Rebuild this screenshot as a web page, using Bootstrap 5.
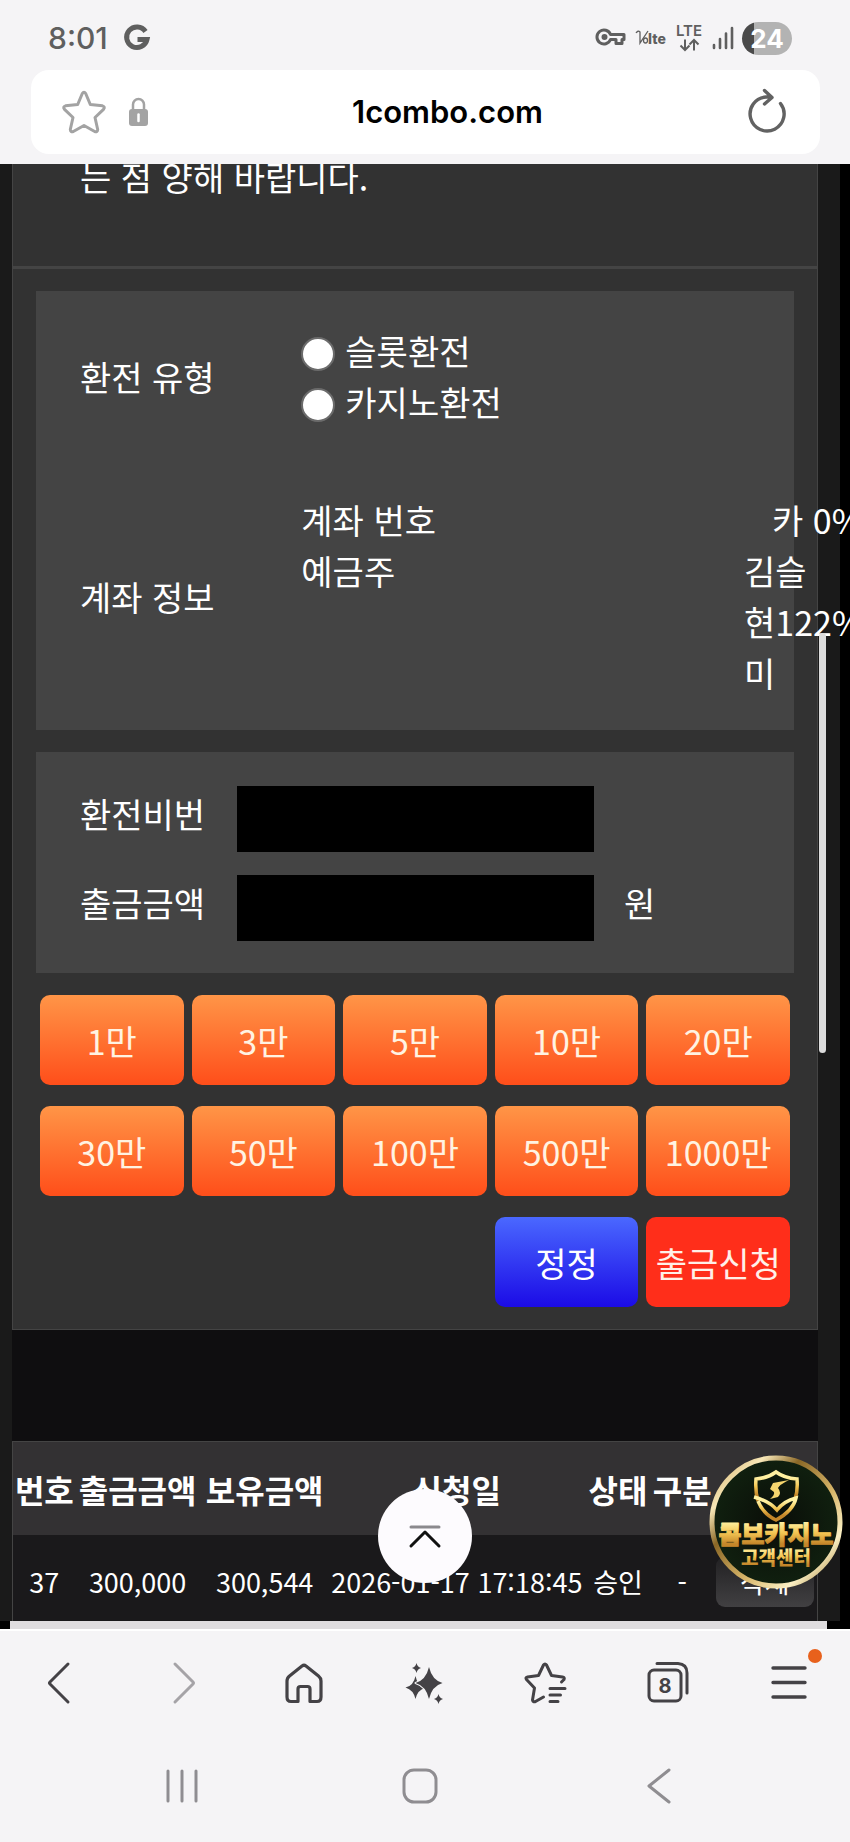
<!DOCTYPE html>
<html lang="ko">
<head>
<meta charset="utf-8">
<meta name="viewport" content="width=device-width, initial-scale=1">
<title>1combo.com</title>
<link href="https://cdn.jsdelivr.net/npm/bootstrap@5.3.0/dist/css/bootstrap.min.css" rel="stylesheet">
<style>
  body { background: #f5f4f6; font-family: "Noto Sans CJK KR", sans-serif; overflow-x: hidden; }
  svg { display: block; overflow: visible; }
  .tool-btn { background: none; border: 0; padding: 0; color: #444246; }

  /* Browser chrome */
  .status-bar { height: 70px; padding: 6px 58px 0 48px; color: #5f5f5f; font-family: Inter, sans-serif; }
  .clock { font-size: 30px; line-height: 36px; font-weight: 500; }
  .battery { width: 50px; height: 33px; border-radius: 17px; background: linear-gradient(90deg, #4a4a4a 12px, #b3b3b3 12px); color: #fff; font-size: 26px; line-height: 33px; font-weight: 700; }
  .url-bar { height: 84px; margin: 0 30px 10px 31px; padding: 0 34px 0 31px; border-radius: 18px; background: #fff; }
  .url-text { font-family: Inter, sans-serif; font-size: 31px; line-height: 36px; font-weight: 600; color: #000; }
  .url-left { width: 87px; }
  .url-right { width: 40px; }

  /* Web page */
  .viewport-area { background: #000; overflow: hidden; }
  .site { background: #1a1a1a; margin-right: 10px; padding: 0 22px 0 12px; color: #fff; font-size: 34px; line-height: 51px; }
  .site-column { background: #0f0e10; }
  .panel { background: #323232; border: 1px solid #444; border-top: 0; }
  .notice { margin: -13px 0 0; padding: 0 67px 64px; border-bottom: 3px solid #444; }
  .panel-body { padding: 22px 23px; }
  .block { background: #444; padding: 34px 0 32px 44px; margin-bottom: 22px; }
  .info-row { display: grid; grid-template-columns: 31% 62% 7%; align-items: center; }
  .info-row + .info-row { margin-top: 67px; }
  .kind-radio { appearance: none; width: 34px; height: 34px; margin: 6px 10px 0 0; border: 2px solid #6b6b6b; border-radius: 50%; background: #fff; }
  .kind-radio:checked { box-shadow: inset 0 0 0 8px #fff; background: #0d6efd; }
  .owner-value { white-space: nowrap; }
  .rate-value { padding-left: 28px; }
  .entry-row { display: grid; grid-template-columns: 22% 50% auto; align-items: start; line-height: 56px; }
  .entry-row + .entry-row { margin-top: 23px; }
  .entry-row input { height: 66px; width: 100%; border: 0; border-radius: 0; background: #000; color: #fff; padding: 0 16px; }
  .unit { padding-left: 30px; }
  .amounts { display: grid; grid-template-columns: repeat(5, 1fr); gap: 21px 8px; padding: 0 4px; }
  .amount-btn { height: 90px; padding: 0; border: 0; border-radius: 10px; font-size: 34px; line-height: 51px; white-space: nowrap; color: #fff3e2; background: linear-gradient(#ff9547, #ff4e1a); }
  .reset-btn { grid-column: 4; color: #fff; background: linear-gradient(#4a68ff, #1b0be6); }
  .apply-btn { color: #fff0e8; background: #ff2e1a; }

  .history { margin-top: 111px; border: 1px solid #444; border-bottom: 0; }
  .history table { width: 100%; table-layout: fixed; text-align: center; white-space: nowrap; }
  .history th { height: 93px; background: #333133; font-size: 32px; line-height: 48px; font-weight: 700; padding: 0; overflow: visible; }
  .history td { height: 86px; background: #1a191b; font-size: 27px; line-height: 40px; padding: 8px 0 0; }
  .delete-btn { width: 98px; height: 50px; border: 0; border-radius: 9px; padding: 0; font-size: 27px; line-height: 40px; color: #fff; background: linear-gradient(#222123, #414042); }
  .scroll-x { height: 8px; margin: 0 23px 0 10px; background: #dfdddf; }
  .scroll-y { position: absolute; right: 24px; top: 32%; height: 420px; width: 7px; border-radius: 4px; background: #dcdcdc; }

  .to-top { position: absolute; left: 50%; bottom: 46px; width: 94px; height: 94px; margin-left: -47px; border-radius: 50%; background: #fdfbfe; }
  .support { position: absolute; right: 7px; bottom: 40px; }

  .toolbar { height: 213px; border-top: 2px solid #fff; }
  .tool-row { height: 104px; }
  .tool-row .tool-btn, .system-row .tool-btn { flex: 1 1 0; min-width: 0; display: flex; justify-content: center; }
  .system-row { height: 101px; padding: 0 72px 0 63px; }
  .system-row .tool-btn { color: #8f8d91; }
</style>
</head>
<body class="d-flex flex-column min-vh-100">

<header>
  <div class="status-bar d-flex align-items-center justify-content-between">
    <div class="d-flex align-items-center">
      <span class="clock">8:01</span>
      <svg class="ms-3" width="26" height="26" viewBox="0 0 26 26" fill="none" stroke="currentColor" stroke-width="5"><path d="M21.500 6.500A10.300 10.300 0 1 0 23 14.500H13.500"/></svg>
    </div>
    <div class="d-flex align-items-center gap-2">
      <svg width="30" height="18" viewBox="0 0 30 18" fill="none" stroke="currentColor" stroke-width="3"><path d="M14.500 5.500H28V10.500H26V14.500H20V10.500H14.500A7 7 0 1 1 14.500 5.500Z" stroke-linejoin="round"/><circle cx="8.500" cy="8" r="1.500"/></svg>
      <svg width="34" height="18" viewBox="0 0 34 18"><g fill="none" stroke="currentColor" stroke-width="1.300"><path d="M2 4Q4 1 6 3L6 14L14 2"/><ellipse cx="11.500" cy="11.500" rx="2" ry="2.500"/></g><text x="14" y="15" font-family="Inter" font-size="14" font-weight="800" fill="currentColor">lte</text></svg>
      <svg width="28" height="28" viewBox="0 0 28 28" fill="none" stroke="currentColor" stroke-width="2"><text x="0" y="12" font-family="Inter" font-size="15" font-weight="600" fill="currentColor" stroke="none">LTE</text><path d="M9 15.500V26M4.500 21.500L9 26L13.500 21.500M18 26.500V16M13.500 20.500L18 16L22.500 20.500"/></svg>
      <svg width="22" height="24" viewBox="0 0 22 24" stroke="currentColor" stroke-width="2.600" stroke-linecap="round"><path d="M2 19V22M8 13V22M14 7.500V22M20 2V22"/></svg>
      <div class="battery text-center">24</div>
    </div>
  </div>
  <div class="url-bar d-flex align-items-center">
    <div class="url-left d-flex align-items-center">
      <button class="tool-btn" aria-label="북마크"><svg width="44" height="44" viewBox="0 0 44 44" fill="none" stroke="#a3a3a3" stroke-width="3" stroke-linejoin="round"><path d="M20.300 3.500Q22 0.800 23.700 3.500L28.300 14.500L40.500 15.800Q43.500 16.800 41.500 19.300L33 27.500L35.700 39.500Q35.500 42.500 32.700 41.500L22 35.500L11.300 41.500Q8.500 42.500 8.300 39.500L11 27.500L2.500 19.300Q0.500 16.800 3.500 15.800L15.700 14.500Z"/></svg></button>
      <svg class="ms-auto" width="21" height="30" viewBox="0 0 21 30"><path d="M5 13V7.500A5.500 5.500 0 0 1 16 7.500V13" fill="none" stroke="#a3a3a3" stroke-width="2.500"/><rect x="1" y="12" width="19" height="17" rx="3" fill="#a3a3a3"/><path d="M10.500 17.500V24" stroke="#fff" stroke-width="2.500" stroke-linecap="round"/></svg>
    </div>
    <span class="url-text flex-grow-1 text-center">1combo.com</span>
    <div class="url-right d-flex justify-content-end">
      <button class="tool-btn" aria-label="새로고침"><svg width="40" height="46" viewBox="0 0 40 46" fill="none" stroke="#626262" stroke-width="3.400" stroke-linecap="round" stroke-linejoin="round"><path d="M34.500 14.500A17 17 0 1 1 20 8H25.500M18.500 1.500L26 8.500L18.500 15"/></svg></button>
    </div>
  </div>
</header>

<main class="viewport-area position-relative flex-grow-1">
  <div class="site">
    <div class="site-column">
      <section class="panel">
        <p class="notice">는 점 양해 바랍니다.</p>
        <form class="panel-body">
          <div class="block">
            <div class="info-row">
              <div>환전 유형</div>
              <div>
                <div class="d-flex align-items-center"><input class="kind-radio" type="radio" name="kind" id="kindSlot"><label for="kindSlot">슬롯환전</label></div>
                <div class="d-flex align-items-center"><input class="kind-radio" type="radio" name="kind" id="kindCasino"><label for="kindCasino">카지노환전</label></div>
              </div>
            </div>
            <div class="info-row">
              <div>계좌 정보</div>
              <div class="align-self-start">계좌 번호<br>예금주</div>
              <div class="owner-value"><div class="rate-value">카 0%</div>김슬<br>현122%<br>미</div>
            </div>
          </div>
          <div class="block">
            <div class="entry-row">
              <label for="pin">환전비번</label>
              <input type="password" id="pin">
            </div>
            <div class="entry-row">
              <label for="amount">출금금액</label>
              <input type="text" id="amount">
              <span class="unit">원</span>
            </div>
          </div>
          <div class="amounts">
            <button type="button" class="amount-btn">1만</button>
            <button type="button" class="amount-btn">3만</button>
            <button type="button" class="amount-btn">5만</button>
            <button type="button" class="amount-btn">10만</button>
            <button type="button" class="amount-btn">20만</button>
            <button type="button" class="amount-btn">30만</button>
            <button type="button" class="amount-btn">50만</button>
            <button type="button" class="amount-btn">100만</button>
            <button type="button" class="amount-btn">500만</button>
            <button type="button" class="amount-btn">1000만</button>
            <button type="reset" class="amount-btn reset-btn">정정</button>
            <button type="button" class="amount-btn apply-btn">출금신청</button>
          </div>
        </form>
      </section>

      <section class="history">
        <table>
          <colgroup>
            <col style="width:7.8%"><col style="width:15.4%"><col style="width:16.2%"><col style="width:31.6%"><col style="width:8.5%"><col style="width:7.5%"><col style="width:13%">
          </colgroup>
          <thead>
            <tr><th>번호</th><th>출금금액</th><th>보유금액</th><th>신청일</th><th>상태</th><th>구분</th><th></th></tr>
          </thead>
          <tbody>
            <tr><td>37</td><td>300,000</td><td>300,544</td><td>2026-01-17 17:18:45</td><td>승인</td><td>-</td><td><button class="delete-btn">삭제</button></td></tr>
          </tbody>
        </table>
      </section>
    </div>
  </div>
  <div class="scroll-x"></div>
  <div class="scroll-y"></div>

  <button class="tool-btn to-top d-flex align-items-center justify-content-center" aria-label="맨 위로">
    <svg width="36" height="26" viewBox="0 0 36 26" fill="none" stroke-linecap="round" stroke-linejoin="round" stroke-width="3"><path d="M4 4H32" stroke="#8b898d"/><path d="M4 23L18 9L32 23" stroke="#111"/></svg>
  </button>

  <a href="#" class="support" aria-label="고객센터">
    <svg width="134" height="134" viewBox="0 0 134 134">
      <defs>
        <linearGradient id="goldRing" x1="0" y1="0" x2="1" y2="1"><stop offset="0" stop-color="#c7a25a"/><stop offset=".2" stop-color="#f8e8b8"/><stop offset=".35" stop-color="#8a6726"/><stop offset=".6" stop-color="#d8b66a"/><stop offset=".8" stop-color="#fbf0c4"/><stop offset="1" stop-color="#9a7428"/></linearGradient>
        <linearGradient id="goldText" x1="0" y1="0" x2="0" y2="1"><stop offset=".2" stop-color="#fff0a0"/><stop offset=".5" stop-color="#f3c552"/><stop offset=".8" stop-color="#c4862a"/></linearGradient>
        <radialGradient id="darkFace"><stop offset="0" stop-color="#0a0d08"/><stop offset="1" stop-color="#10200f"/></radialGradient>
      </defs>
      <circle cx="67" cy="67" r="64" fill="url(#darkFace)" stroke="url(#goldRing)" stroke-width="5"/>
      <g fill="none" stroke="url(#goldText)" stroke-width="3.500" stroke-linejoin="miter">
        <path d="M49 46Q46 36 47 24Q59 23 67 17Q75 23 88 24Q89 36 86 44"/>
        <path d="M45 42Q60 46 68 55Q75 46 87 43Q84 56 67 65Q54 59 49 46"/>
      </g>
      <path d="M64 28L80 25Q70 30 69 33Q73 38 69 42L61 44Q66 40 65 37L61 34Z" fill="#f6d66e"/>
      <g font-family="Noto Sans CJK KR" font-weight="900" text-anchor="middle" fill="url(#goldText)" stroke-linejoin="round">
        <text x="67" y="89" font-size="25" stroke="url(#goldText)" stroke-width="1">콤보카지노</text>
        <text x="67" y="110" font-size="19">고객센터</text>
      </g>
    </svg>
  </a>
</main>

<footer class="toolbar">
  <div class="tool-row d-flex align-items-center">
    <button class="tool-btn" aria-label="뒤로"><svg width="44" height="44" viewBox="0 0 44 44" fill="none" stroke="currentColor" stroke-width="3" stroke-linecap="round" stroke-linejoin="round"><path d="M29 3L11 21Q10 22 11 23L29 41"/></svg></button>
    <button class="tool-btn" aria-label="앞으로"><svg width="44" height="44" viewBox="0 0 44 44" fill="none" stroke="#a5a3a7" stroke-width="3" stroke-linecap="round" stroke-linejoin="round"><path d="M15 3L33 21Q34 22 33 23L15 41"/></svg></button>
    <button class="tool-btn" aria-label="홈"><svg width="44" height="44" viewBox="0 0 44 44" fill="none" stroke="currentColor" stroke-width="3.200" stroke-linejoin="round"><path d="M16 40.500H9Q5 40.500 5 36V20Q5 17 7.500 15L20 5Q22 3.500 24 5L36.500 15Q39 17 39 20V36Q39 40.500 35 40.500H28V28Q28 25.500 25.500 25.500H18.500Q16 25.500 16 28Z"/></svg></button>
    <button class="tool-btn" aria-label="AI"><svg width="44" height="44" viewBox="0 0 44 44" fill="currentColor" stroke-linejoin="round"><path d="M12.500 15Q14.500 23 18 26Q22 27 22 27Q14.500 29 12.500 38Q10.500 29 2.500 26.500Q10.500 25 12.500 15ZM13.500 2Q14.300 6 18 7Q14.300 8 13.500 12Q12.700 8 9 7Q12.700 6 13.500 2ZM35.500 33Q36.300 37 40 38Q36.300 39 35.500 43Q34.700 39 31 38Q34.700 37 35.500 33Z"/><path d="M26 6Q29 19 39.500 22Q29 25 26 38Q23 25 12.500 22Q23 19 26 6Z" stroke="#f5f4f6" stroke-width="2" paint-order="stroke"/></svg></button>
    <button class="tool-btn" aria-label="북마크 목록"><svg width="44" height="44" viewBox="0 0 44 44" fill="none" stroke="currentColor" stroke-width="3" stroke-linecap="round" stroke-linejoin="round"><path d="M37.500 21L40 18.500Q41 16.500 38.500 16L27.500 14.500L22.500 4Q21 2 19.500 4L14.500 14.500L3.500 16Q1 16.500 2.500 18.500L10.500 27L8.500 39Q9 41.500 11.500 40.500L19.500 36M26 27.500H41M26 34H36.500M26 40.500H34"/></svg></button>
    <button class="tool-btn" aria-label="탭"><svg width="44" height="44" viewBox="0 0 44 44" fill="none" stroke="currentColor" stroke-width="3" stroke-linecap="round"><rect x="3" y="9" width="32" height="31" rx="5"/><path d="M11 2.500H32Q41 3 41 12V32"/><text x="19" y="31.500" text-anchor="middle" font-family="Inter" font-size="20" font-weight="700" fill="currentColor" stroke="none">8</text></svg></button>
    <button class="tool-btn" aria-label="메뉴"><svg width="68" height="72" viewBox="-4 0 68 72" fill="none" stroke="currentColor" stroke-width="3.400" stroke-linecap="round"><path d="M14 21H46M14 35.500H46M14 50H46"/><circle cx="56" cy="9" r="7" fill="#e8611c" stroke="none"/></svg></button>
  </div>
  <div class="system-row d-flex align-items-center">
    <button class="tool-btn" aria-label="최근 앱"><svg width="36" height="36" viewBox="0 0 36 36" stroke="currentColor" stroke-width="3" stroke-linecap="round"><path d="M4 3V33M18 3V33M32 3V33"/></svg></button>
    <button class="tool-btn" aria-label="홈 화면"><svg width="36" height="36" viewBox="0 0 36 36" fill="none" stroke="currentColor" stroke-width="3"><rect x="2" y="2" width="32" height="32" rx="10"/></svg></button>
    <button class="tool-btn" aria-label="이전"><svg width="36" height="36" viewBox="0 0 36 36" fill="none" stroke="currentColor" stroke-width="3" stroke-linecap="round" stroke-linejoin="round"><path d="M28 2L8 18L28 34"/></svg></button>
  </div>
</footer>

<script src="https://cdn.jsdelivr.net/npm/bootstrap@5.3.0/dist/js/bootstrap.bundle.min.js"></script>
</body>
</html>
